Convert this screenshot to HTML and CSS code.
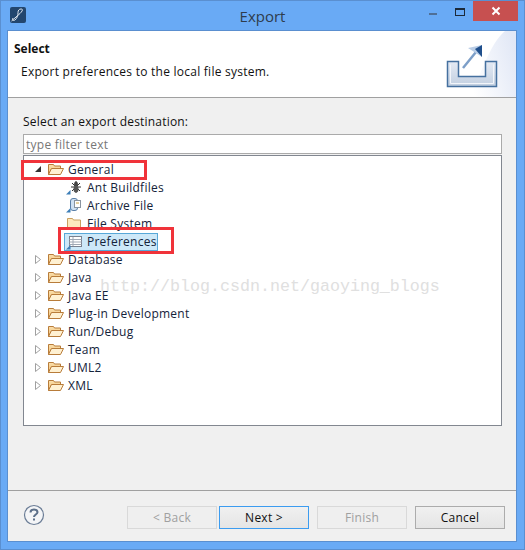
FILE: index.html
```html
<!DOCTYPE html>
<html lang="en">
<head>
    <meta charset="UTF-8">
    <title>Export</title>
    <link rel="stylesheet" href="styles.css">
</head>
<body>
    <svg class="defs" width="0" height="0">
        <defs>
            <linearGradient id="folder-back" x1="0" y1="0" x2="0" y2="1">
                <stop offset="0" stop-color="#fbe0ac"/>
                <stop offset="1" stop-color="#f0c078"/>
            </linearGradient>
        </defs>
        <symbol id="folder" viewBox="0 0 16 12">
            <path d="M0.500 11.500V1.500h5l1 1.500h6v3h-9z" fill="url(#folder-back)" stroke="#b87c3a"/>
            <path d="M0.500 11.500l3-6h12l-3 6z" fill="#fff1d2" stroke="#b87c3a"/>
        </symbol>
        <symbol id="corner" viewBox="0 0 5 5">
            <path d="M4.500 0v4.500H0z" fill="#3d7fb8"/>
        </symbol>
        <symbol id="closed" viewBox="0 0 6 9">
            <path d="M0.500 0.500l5 4-5 4z" fill="#fff" stroke="#a0a0a0"/>
        </symbol>
    </svg>
    <div class="window">
        <div class="titlebar">
            <div class="app-icon">
                <svg width="16" height="16" viewBox="0 0 16 16">
                    <rect width="16" height="16" rx="2" fill="#23466e"/>
                    <path d="M1.500 14L10 6.500C13 3.500 13 2 11 2C9 2 8 3.500 8 5.500C8 8 7.500 11 5 13C3.500 14 1.500 13.500 3 11" fill="none" stroke="#dfe6ee" stroke-width="1"/>
                </svg>
            </div>
            <div class="title">Export</div>
            <div class="controls">
                <span class="minimize"></span>
                <span class="maximize"></span>
                <span class="close">
                    <svg width="10" height="10" viewBox="0 0 10 10">
                        <path d="M1.500 1.500l7 7M8.500 1.500l-7 7" stroke="#fff" stroke-width="2"/>
                    </svg>
                </span>
            </div>
        </div>
        <div class="client">
            <div class="banner">
                <div class="banner-text">
                    <h1>Select</h1>
                    <p>Export preferences to the local file system.</p>
                </div>
                <svg class="banner-art" width="77" height="66" viewBox="0 0 77 66">
                    <defs>
                        <linearGradient id="glow" x1="0" y1="0.700" x2="1" y2="0.300">
                            <stop offset="0" stop-color="#fff"/>
                            <stop offset="1" stop-color="#e2e8f6"/>
                        </linearGradient>
                        <linearGradient id="tray" x1="0" y1="0" x2="0" y2="1">
                            <stop offset="0" stop-color="#e4eaf4"/>
                            <stop offset="1" stop-color="#c2cfe0"/>
                        </linearGradient>
                    </defs>
                    <path d="M77 0H66C50 14 44 40 30 66H77z" fill="url(#glow)"/>
                    <path d="M8.500 30.500h11v15h27v-15h11v25h-49z" fill="url(#tray)" stroke="#45709f" stroke-width="1.500"/>
                    <path d="M11.500 33.500v19h43v-19" fill="none" stroke="#f2f5fa"/>
                    <path d="M24 37L37 21" stroke="#7d9fc8" stroke-width="2.500"/>
                    <path d="M29 17L43 14V26z" fill="#b9cde6"/>
                    <path d="M36 18L43 14V26z" fill="#1f4f8c"/>
                </svg>
            </div>
            <div class="content">
                <label class="field-label" for="filter">Select an export destination:</label>
                <input class="filter" id="filter" type="text" placeholder="type filter text">
                <div class="tree">
                    <div class="row">
                        <span class="twist"><span class="open-mark"></span></span>
                        <svg class="folder" width="16" height="12"><use href="#folder"/></svg>
                        <span>General</span>
                    </div>
                    <div class="row child">
                        <svg class="leaf" width="16" height="16" viewBox="0 0 16 16">
                            <path d="M10 2v12M6 4l8 8M14 4l-8 8M5 8h10" stroke="#333" stroke-width="1"/>
                            <ellipse cx="10" cy="5" rx="2" ry="2.500" fill="#444"/>
                            <ellipse cx="10" cy="10" rx="2.500" ry="3.500" fill="#555"/>
                            <use href="#corner" x="0" y="11" width="5" height="5"/>
                        </svg>
                        <span>Ant Buildfiles</span>
                    </div>
                    <div class="row child">
                        <svg class="leaf" width="16" height="16" viewBox="0 0 16 16">
                            <rect x="4.500" y="1.500" width="7" height="12" rx="2.500" fill="#cfe0f2" stroke="#5a7fa8"/>
                            <rect x="8.500" y="3.500" width="6" height="7" fill="#fff" stroke="#8a94a0"/>
                            <path d="M10 6h3" stroke="#c8a040"/>
                            <use href="#corner" x="0" y="11" width="5" height="5"/>
                        </svg>
                        <span>Archive File</span>
                    </div>
                    <div class="row child">
                        <svg class="leaf" width="16" height="16" viewBox="0 0 16 16">
                            <path d="M1.500 14.500V3.500h5l1 1.500h7v9.500z" fill="#fde9bd" stroke="#c9a060"/>
                        </svg>
                        <span>File System</span>
                    </div>
                    <div class="row child">
                        <div class="selected">
                            <svg class="leaf" width="16" height="16" viewBox="0 0 16 16">
                                <rect x="3.500" y="2.500" width="12" height="10" fill="#fff" stroke="#7a8290"/>
                                <path d="M3.500 5.500h12M3.500 8h12M3.500 10.500h12M7 3v9" stroke="#a0a8b4"/>
                                <use href="#corner" x="0" y="11" width="5" height="5"/>
                            </svg>
                            <span>Preferences</span>
                        </div>
                    </div>
                    <div class="row"><span class="twist"><svg width="6" height="9"><use href="#closed"/></svg></span><svg class="folder" width="16" height="12"><use href="#folder"/></svg><span>Database</span></div>
                    <div class="row"><span class="twist"><svg width="6" height="9"><use href="#closed"/></svg></span><svg class="folder" width="16" height="12"><use href="#folder"/></svg><span>Java</span></div>
                    <div class="row"><span class="twist"><svg width="6" height="9"><use href="#closed"/></svg></span><svg class="folder" width="16" height="12"><use href="#folder"/></svg><span>Java EE</span></div>
                    <div class="row"><span class="twist"><svg width="6" height="9"><use href="#closed"/></svg></span><svg class="folder" width="16" height="12"><use href="#folder"/></svg><span>Plug-in Development</span></div>
                    <div class="row"><span class="twist"><svg width="6" height="9"><use href="#closed"/></svg></span><svg class="folder" width="16" height="12"><use href="#folder"/></svg><span>Run/Debug</span></div>
                    <div class="row"><span class="twist"><svg width="6" height="9"><use href="#closed"/></svg></span><svg class="folder" width="16" height="12"><use href="#folder"/></svg><span>Team</span></div>
                    <div class="row"><span class="twist"><svg width="6" height="9"><use href="#closed"/></svg></span><svg class="folder" width="16" height="12"><use href="#folder"/></svg><span>UML2</span></div>
                    <div class="row"><span class="twist"><svg width="6" height="9"><use href="#closed"/></svg></span><svg class="folder" width="16" height="12"><use href="#folder"/></svg><span>XML</span></div>
                </div>
            </div>
            <div class="footer">
                <svg class="help" width="22" height="22" viewBox="0 0 22 22">
                    <circle cx="11" cy="11" r="9.500" fill="#f4f5f7" stroke="#6b7d96" stroke-width="1.200"/>
                    <path d="M7.500 8.500C7.500 6.500 9 5.500 11 5.500C13 5.500 14.500 6.500 14.500 8.300C14.500 10.500 11 10.500 11 13" fill="none" stroke="#5d708a" stroke-width="2"/>
                    <rect x="10" y="14.500" width="2" height="2" fill="#5d708a"/>
                </svg>
                <div class="buttons">
                    <button class="btn" disabled>&lt; Back</button>
                    <button class="btn default">Next &gt;</button>
                    <button class="btn finish" disabled>Finish</button>
                    <button class="btn cancel">Cancel</button>
                </div>
            </div>
        </div>
        <div class="mark mark-general"></div>
        <div class="mark mark-prefs"></div>
        <div class="watermark">http://blog.csdn.net/gaoying_blogs</div>
    </div>
</body>
</html>
```

FILE: styles.css
```css
* {
    box-sizing: border-box;
}
body {
    margin: 0;
    font-family: 'Open Sans', 'Noto Sans', Arial, sans-serif;
    font-size: 12px;
    color: #111;
}
.defs {
    position: absolute;
}
.window {
    position: relative;
    width: 525px;
    height: 550px;
    background-color: #69aaf5;
    border: 1px solid #5a8fd0;
    display: flex;
    flex-direction: column;
    overflow: hidden;
}
.titlebar {
    height: 29px;
    display: grid;
    grid-template-columns: 1fr auto 1fr;
    align-items: start;
    flex-shrink: 0;
}
.app-icon {
    margin: 6px 0 0 9px;
    width: 16px;
    height: 16px;
}
.title {
    font-size: 15px;
    line-height: 20px;
    padding-top: 5px;
    color: #2e3c4c;
}
.controls {
    display: flex;
    justify-content: flex-end;
    align-items: flex-start;
    margin-right: 6px;
}
.minimize {
    width: 8px;
    height: 2px;
    background-color: #4f6f96;
    margin: 12px 18px 0 0;
}
.maximize {
    width: 10px;
    height: 8px;
    border: 1px solid #1c2a3a;
    border-top-width: 2px;
    margin: 7px 8px 0 0;
}
.close {
    width: 45px;
    height: 20px;
    background-color: #c75050;
    display: flex;
    align-items: center;
    justify-content: center;
}
.client {
    flex: 1;
    margin: 0 7px 7px 6px;
    border: 1px solid #5a8fd0;
    background-color: #f0f0f0;
    display: flex;
    flex-direction: column;
}
.banner {
    height: 67px;
    background-color: #fff;
    border-bottom: 1px solid #a0a0a0;
    display: flex;
    justify-content: space-between;
    flex-shrink: 0;
}
.banner-text {
    padding: 9px 0 0 6px;
}
.banner h1 {
    margin: 0;
    font-size: 12px;
    line-height: 18px;
    font-weight: 700;
}
.banner p {
    margin: 6px 0 0 7px;
    line-height: 16px;
    letter-spacing: 0.25px;
}
.banner-art {
    display: block;
}
.content {
    flex: 1;
    padding: 16px 14px 0 15px;
    display: flex;
    flex-direction: column;
}
.field-label {
    display: block;
    line-height: 16px;
    letter-spacing: 0.2px;
    margin-bottom: 4px;
}
.filter {
    height: 20px;
    width: 100%;
    border: 1px solid #aaa;
    background-color: #fff;
    padding: 0 2px;
    font: inherit;
    letter-spacing: 0.25px;
    outline: none;
}
.filter::placeholder {
    color: #777;
    opacity: 1;
}
.tree {
    margin-top: 1px;
    height: 271px;
    background-color: #fff;
    border: 1px solid #828790;
    padding-top: 4px;
}
.row {
    height: 18px;
    display: flex;
    align-items: center;
    padding-left: 11px;
    letter-spacing: 0.25px;
    color: #14233a;
}
.row.child {
    padding-left: 42px;
}
.twist {
    width: 13px;
    display: flex;
    align-items: center;
}
.open-mark {
    width: 0;
    height: 0;
    border-style: solid;
    border-width: 0 0 6px 6px;
    border-color: transparent transparent #333 transparent;
}
.folder {
    margin-right: 4px;
}
.leaf {
    margin-right: 5px;
    flex-shrink: 0;
}
.selected {
    display: flex;
    align-items: center;
    height: 18px;
    margin: 1px 0 0 -2px;
    padding: 0 0 0 1px;
    background-color: #cde8f8;
    border: 1px solid #58a8d8;
}
.footer {
    height: 51px;
    border-top: 1px solid #a0a0a0;
    margin-top: 62px;
    padding: 13px 11px 0 15px;
    display: flex;
    justify-content: space-between;
    align-items: flex-start;
    flex-shrink: 0;
}
.buttons {
    display: flex;
    gap: 2px;
    margin-top: 2px;
}
.btn {
    width: 90px;
    height: 23px;
    padding: 0;
    border: 1px solid #acacac;
    background: linear-gradient(#f0f0f0, #e5e5e5);
    font: inherit;
    letter-spacing: 0.25px;
    color: #111;
}
.btn:disabled {
    background: #efefef;
    border-color: #d9d9d9;
    color: #a0a0a0;
}
.btn.default {
    border-color: #3c9cf0;
}
.finish,
.cancel {
    margin-left: 6px;
}
.mark {
    position: absolute;
    border: 3px solid #f0333a;
}
.mark-general {
    left: 20px;
    top: 159px;
    width: 126px;
    height: 20px;
}
.mark-prefs {
    left: 57px;
    top: 226px;
    width: 116px;
    height: 27px;
}
.watermark {
    position: absolute;
    left: 99px;
    top: 276px;
    font-family: 'Liberation Mono', monospace;
    font-size: 16.670px;
    line-height: 20px;
    color: #e0e0e0;
    white-space: pre;
}
```
